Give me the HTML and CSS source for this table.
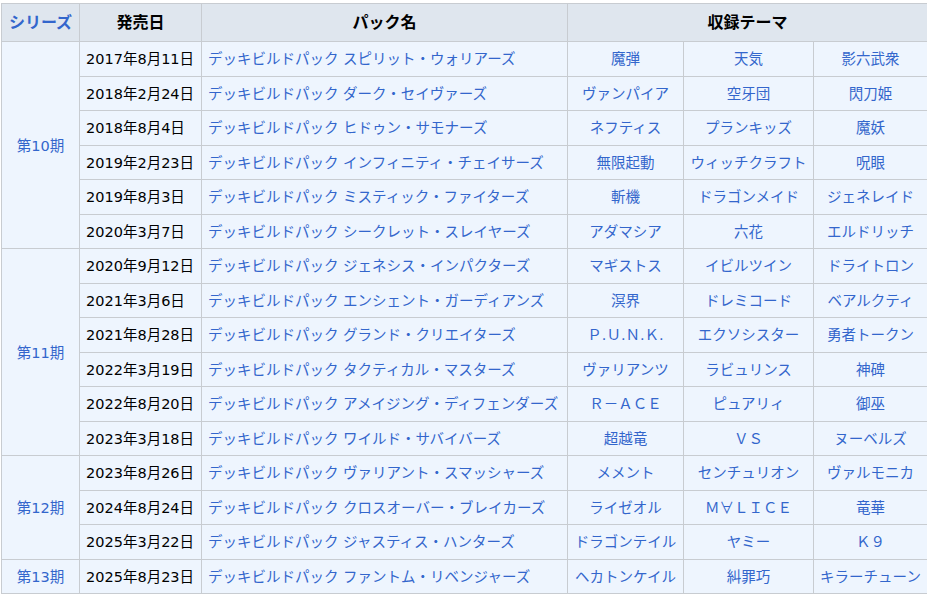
FILE: index.html
```html
<!DOCTYPE html>
<html lang="ja">
<head>
<meta charset="utf-8">
<link rel="stylesheet" href="styles.css">
</head>
<body>
<table class="wikitable">
  <colgroup>
    <col class="c-series">
    <col class="c-date">
    <col class="c-pack">
    <col class="c-t1">
    <col class="c-t2">
    <col class="c-t3">
  </colgroup>
  <thead>
    <tr>
      <th><a class="link">シリーズ</a></th>
      <th>発売日</th>
      <th>パック名</th>
      <th colspan="3">収録テーマ</th>
    </tr>
  </thead>
  <tbody>
    <tr>
      <td class="series" rowspan="6"><a class="link">第10期</a></td>
      <td class="date">2017年8月11日</td>
      <td class="pack"><a class="link">デッキビルドパック スピリット・ウォリアーズ</a></td>
      <td class="theme"><a class="link">魔弾</a></td>
      <td class="theme"><a class="link">天気</a></td>
      <td class="theme"><a class="link">影六武衆</a></td>
    </tr>
    <tr>
      <td class="date">2018年2月24日</td>
      <td class="pack"><a class="link">デッキビルドパック ダーク・セイヴァーズ</a></td>
      <td class="theme"><a class="link">ヴァンパイア</a></td>
      <td class="theme"><a class="link">空牙団</a></td>
      <td class="theme"><a class="link">閃刀姫</a></td>
    </tr>
    <tr>
      <td class="date">2018年8月4日</td>
      <td class="pack"><a class="link">デッキビルドパック ヒドゥン・サモナーズ</a></td>
      <td class="theme"><a class="link">ネフティス</a></td>
      <td class="theme"><a class="link">プランキッズ</a></td>
      <td class="theme"><a class="link">魔妖</a></td>
    </tr>
    <tr>
      <td class="date">2019年2月23日</td>
      <td class="pack"><a class="link">デッキビルドパック インフィニティ・チェイサーズ</a></td>
      <td class="theme"><a class="link">無限起動</a></td>
      <td class="theme"><a class="link">ウィッチクラフト</a></td>
      <td class="theme"><a class="link">呪眼</a></td>
    </tr>
    <tr>
      <td class="date">2019年8月3日</td>
      <td class="pack"><a class="link">デッキビルドパック ミスティック・ファイターズ</a></td>
      <td class="theme"><a class="link">斬機</a></td>
      <td class="theme"><a class="link">ドラゴンメイド</a></td>
      <td class="theme"><a class="link">ジェネレイド</a></td>
    </tr>
    <tr>
      <td class="date">2020年3月7日</td>
      <td class="pack"><a class="link">デッキビルドパック シークレット・スレイヤーズ</a></td>
      <td class="theme"><a class="link">アダマシア</a></td>
      <td class="theme"><a class="link">六花</a></td>
      <td class="theme"><a class="link">エルドリッチ</a></td>
    </tr>
    <tr>
      <td class="series" rowspan="6"><a class="link">第11期</a></td>
      <td class="date">2020年9月12日</td>
      <td class="pack"><a class="link">デッキビルドパック ジェネシス・インパクターズ</a></td>
      <td class="theme"><a class="link">マギストス</a></td>
      <td class="theme"><a class="link">イビルツイン</a></td>
      <td class="theme"><a class="link">ドライトロン</a></td>
    </tr>
    <tr>
      <td class="date">2021年3月6日</td>
      <td class="pack"><a class="link">デッキビルドパック エンシェント・ガーディアンズ</a></td>
      <td class="theme"><a class="link">溟界</a></td>
      <td class="theme"><a class="link">ドレミコード</a></td>
      <td class="theme"><a class="link">ベアルクティ</a></td>
    </tr>
    <tr>
      <td class="date">2021年8月28日</td>
      <td class="pack"><a class="link">デッキビルドパック グランド・クリエイターズ</a></td>
      <td class="theme"><a class="link">Ｐ.Ｕ.Ｎ.Ｋ.</a></td>
      <td class="theme"><a class="link">エクソシスター</a></td>
      <td class="theme"><a class="link">勇者トークン</a></td>
    </tr>
    <tr>
      <td class="date">2022年3月19日</td>
      <td class="pack"><a class="link">デッキビルドパック タクティカル・マスターズ</a></td>
      <td class="theme"><a class="link">ヴァリアンツ</a></td>
      <td class="theme"><a class="link">ラビュリンス</a></td>
      <td class="theme"><a class="link">神碑</a></td>
    </tr>
    <tr>
      <td class="date">2022年8月20日</td>
      <td class="pack"><a class="link">デッキビルドパック アメイジング・ディフェンダーズ</a></td>
      <td class="theme"><a class="link">Ｒ－ＡＣＥ</a></td>
      <td class="theme"><a class="link">ピュアリィ</a></td>
      <td class="theme"><a class="link">御巫</a></td>
    </tr>
    <tr>
      <td class="date">2023年3月18日</td>
      <td class="pack"><a class="link">デッキビルドパック ワイルド・サバイバーズ</a></td>
      <td class="theme"><a class="link">超越竜</a></td>
      <td class="theme"><a class="link">ＶＳ</a></td>
      <td class="theme"><a class="link">ヌーベルズ</a></td>
    </tr>
    <tr>
      <td class="series" rowspan="3"><a class="link">第12期</a></td>
      <td class="date">2023年8月26日</td>
      <td class="pack"><a class="link">デッキビルドパック ヴァリアント・スマッシャーズ</a></td>
      <td class="theme"><a class="link">メメント</a></td>
      <td class="theme"><a class="link">センチュリオン</a></td>
      <td class="theme"><a class="link">ヴァルモニカ</a></td>
    </tr>
    <tr>
      <td class="date">2024年8月24日</td>
      <td class="pack"><a class="link">デッキビルドパック クロスオーバー・ブレイカーズ</a></td>
      <td class="theme"><a class="link">ライゼオル</a></td>
      <td class="theme"><a class="link cjk">Ｍ∀ＬＩＣＥ</a></td>
      <td class="theme"><a class="link">竜華</a></td>
    </tr>
    <tr>
      <td class="date">2025年3月22日</td>
      <td class="pack"><a class="link">デッキビルドパック ジャスティス・ハンターズ</a></td>
      <td class="theme"><a class="link">ドラゴンテイル</a></td>
      <td class="theme"><a class="link">ヤミー</a></td>
      <td class="theme"><a class="link">Ｋ９</a></td>
    </tr>
    <tr>
      <td class="series"><a class="link">第13期</a></td>
      <td class="date">2025年8月23日</td>
      <td class="pack"><a class="link">デッキビルドパック ファントム・リベンジャーズ</a></td>
      <td class="theme"><a class="link">ヘカトンケイル</a></td>
      <td class="theme"><a class="link">糾罪巧</a></td>
      <td class="theme"><a class="link">キラーチューン</a></td>
    </tr>
  </tbody>
</table>
</body>
</html>
```

FILE: styles.css
```css
html, body {
  margin: 0;
  padding: 0;
  background: #ffffff;
}

body {
  font-family: "DejaVu Sans", "Noto Sans CJK JP", sans-serif;
  font-size: 14.5px;
  color: #202122;
}

.wikitable {
  margin: 3px 0 0 1px;
  border-collapse: collapse;
  table-layout: fixed;
  width: 926px;
  background: #eef5fe;
  border: 1px solid #c8ccd1;
}

.c-series { width: 78px; }
.c-date { width: 122px; }
.c-pack { width: 366px; }
.c-t1 { width: 116px; }
.c-t2 { width: 130px; }
.c-t3 { width: 114px; }

.wikitable th,
.wikitable td {
  border: 1px solid #c8ccd1;
  padding: 1px 6px 0;
  white-space: nowrap;
  overflow: hidden;
  line-height: 20px;
}

.wikitable th {
  background: #dfe6ee;
  font-weight: bold;
  color: #000;
  text-align: center;
  height: 36px;
  font-size: 16px;
}

.wikitable td {
  height: 32.5px;
}

.link {
  color: #3366cc;
  text-decoration: none;
}

.cjk {
  font-family: "Noto Sans CJK JP", sans-serif;
}

.series {
  text-align: center;
}

.date {
  text-align: left;
  color: #000;
}

.pack {
  text-align: left;
}

.theme {
  text-align: center;
}
```
